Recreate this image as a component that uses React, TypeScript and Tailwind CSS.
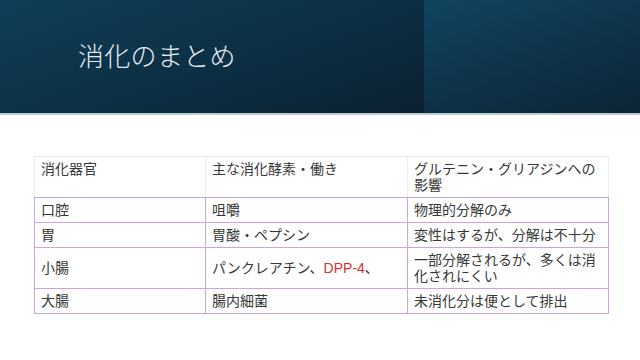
import React from 'react';

const rows: { organ: string; enzyme: React.ReactNode; effect: string; tall?: boolean }[] = [
  { organ: '口腔', enzyme: '咀嚼', effect: '物理的分解のみ' },
  { organ: '胃', enzyme: '胃酸・ペプシン', effect: '変性はするが、分解は不十分' },
  {
    organ: '小腸',
    enzyme: (
      <>
        パンクレアチン、<span className="text-[#d9302c]">DPP-4</span>、
      </>
    ),
    effect: '一部分解されるが、多くは消化されにくい',
    tall: true,
  },
  { organ: '大腸', enzyme: '腸内細菌', effect: '未消化分は便として排出' },
];

const App: React.FC = () => {
  return (
    <div
      className="w-[640px] h-[360px] bg-white overflow-hidden"
      style={{ fontFamily: '"Liberation Sans", "Noto Sans CJK JP", sans-serif' }}
    >
      {/* title band */}
      <div className="flex h-[113px]">
        <div className="w-[424px] flex items-center pl-[78px] pt-[2px] bg-[linear-gradient(160deg,#0f3e58_0%,#0c2f44_55%,#0b2130_100%)]">
          <h1 className="text-[26px] font-light text-[#e6edf1] tracking-[0.3px]">消化のまとめ</h1>
        </div>
        <div className="flex-1 bg-[linear-gradient(160deg,#114460_0%,#0e3249_55%,#0c2535_100%)]" />
      </div>
      <div className="h-[2px] bg-[#bccad3]" />

      {/* table */}
      <div className="pt-[41px] pl-[34px]">
        <table className="border-collapse text-[14px] leading-[16px] text-[#383838] table-fixed w-[574px]">
          <colgroup>
            <col className="w-[171px]" />
            <col className="w-[202px]" />
            <col className="w-[201px]" />
          </colgroup>
          <thead>
            <tr className="h-[41px] align-top">
              <th className="border border-[#ececec] border-b-[#c3a6e0] px-[6px] py-[4px] text-left font-normal">消化器官</th>
              <th className="border border-[#ececec] border-b-[#c3a6e0] px-[6px] py-[4px] text-left font-normal">主な消化酵素・働き</th>
              <th className="border border-[#ececec] border-b-[#c3a6e0] px-[6px] py-[4px] text-left font-normal">
                グルテニン・グリアジンへの影響
              </th>
            </tr>
          </thead>
          <tbody>
            {rows.map((r) => (
              <tr key={r.organ} className={r.tall ? 'h-[40px]' : 'h-[25px]'}>
                <td className="border border-[#c9a6e2] px-[6px] py-[4px] align-middle">{r.organ}</td>
                <td className="border border-[#c9a6e2] px-[6px] py-[4px] align-middle">{r.enzyme}</td>
                <td className="border border-[#c9a6e2] px-[6px] py-[4px] align-middle">{r.effect}</td>
              </tr>
            ))}
          </tbody>
        </table>
      </div>
    </div>
  );
};

export default App;
